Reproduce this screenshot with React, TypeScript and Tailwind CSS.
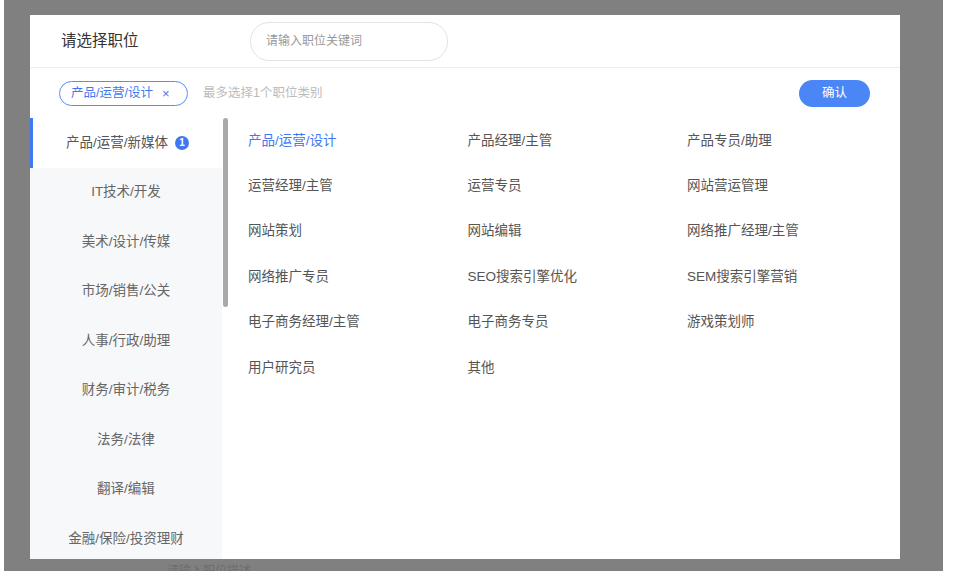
import React from "react";

const categories = [
  "产品/运营/新媒体",
  "IT技术/开发",
  "美术/设计/传媒",
  "市场/销售/公关",
  "人事/行政/助理",
  "财务/审计/税务",
  "法务/法律",
  "翻译/编辑",
  "金融/保险/投资理财",
];

const positions = [
  "产品/运营/设计",
  "产品经理/主管",
  "产品专员/助理",
  "运营经理/主管",
  "运营专员",
  "网站营运管理",
  "网站策划",
  "网站编辑",
  "网络推广经理/主管",
  "网络推广专员",
  "SEO搜索引擎优化",
  "SEM搜索引擎营销",
  "电子商务经理/主管",
  "电子商务专员",
  "游戏策划师",
  "用户研究员",
  "其他",
];

export default function App() {
  return (
    <div
      className="w-[956px] h-[571px] bg-white overflow-hidden"
      style={{ fontFamily: '"Liberation Sans", "Noto Sans CJK SC", sans-serif' }}
    >
      <div className="ml-[4px] w-[939px] h-[571px] bg-[#808080] pt-[15px] pl-[26px] overflow-hidden">
        {/* Dialog */}
        <div className="w-[870px] h-[544px] bg-white flex flex-col">
          {/* Header */}
          <div className="h-[53px] shrink-0 flex items-center pl-[31px] border-b border-[#eeeeee]">
            <div className="w-[189px] text-[15.5px] text-[#333]">请选择职位</div>
            <div className="w-[198px] h-[39px] rounded-[19px] border border-[#e3e3e3] flex items-center pl-[15px] text-[12px] text-[#999]">
              请输入职位关键词
            </div>
          </div>

          {/* Selected bar */}
          <div className="h-[50px] shrink-0 flex items-center pl-[29px] pr-[30px]">
            <div className="h-[25px] w-[129px] rounded-full border border-[#5b8cf7] flex items-center pl-[11px] text-[12.5px] text-[#3f78f2]">
              产品/运营/设计
              <span className="ml-[9px] text-[13px] leading-none">×</span>
            </div>
            <div className="ml-[15px] text-[12.5px] text-[#bbbbbb]">最多选择1个职位类别</div>
            <button className="ml-auto w-[71px] h-[27px] rounded-full bg-[#4b86f6] text-white text-[12.5px]">
              确认
            </button>
          </div>

          {/* Body */}
          <div className="flex flex-1 min-h-0">
            <div className="w-[192px] shrink-0 bg-[#f7f8fa] flex flex-col">
              {categories.map((c, i) => (
                <div
                  key={c}
                  className={
                    i === 0
                      ? "h-[49.5px] shrink-0 flex items-center justify-center bg-white border-l-[3px] border-[#3f78f2] text-[13.5px] text-[#555]"
                      : "h-[49.5px] shrink-0 flex items-center justify-center text-[13.5px] text-[#666]"
                  }
                >
                  {c}
                  {i === 0 && (
                    <span className="ml-[7px] w-[14px] h-[14px] rounded-full bg-[#3f78f2] text-white text-[10px] font-bold flex items-center justify-center">
                      1
                    </span>
                  )}
                </div>
              ))}
            </div>
            {/* scrollbar */}
            <div className="w-[5px] shrink-0 ml-[1px]">
              <div className="h-[189px] w-[5px] rounded-full bg-[#a9a9a9]" />
            </div>
            <div className="flex-1 min-w-0 pl-[20px]">
              <div className="grid grid-cols-[219.5px_219.5px_1fr] auto-rows-[45.4px]">
                {positions.map((p, i) => (
                  <div
                    key={p}
                    className={
                      i === 0
                        ? "flex items-center text-[13.5px] text-[#3f78f2]"
                        : "flex items-center text-[13.5px] text-[#555]"
                    }
                  >
                    {p}
                  </div>
                ))}
              </div>
            </div>
          </div>
        </div>
        <div className="pl-[137px] pt-[3px] text-[12px] text-[#6e6e6e]">请输入职位描述</div>
      </div>
    </div>
  );
}
